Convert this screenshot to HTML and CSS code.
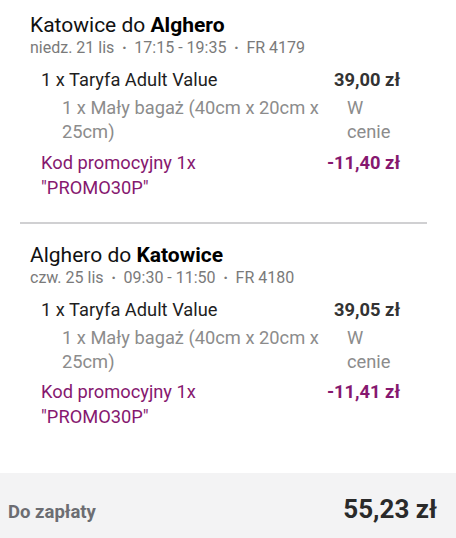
FILE: index.html
```html
<!DOCTYPE html>
<html lang="pl">
<head>
<meta charset="utf-8">
<link rel="stylesheet" href="styles.css">
</head>
<body>
<div class="summary">
  <section class="flight">
    <h2 class="route">Katowice do <b>Alghero</b></h2>
    <div class="meta"><span>niedz. 21 lis</span><span class="dot">·</span><span>17:15 - 19:35</span><span class="dot">·</span><span>FR 4179</span></div>
    <div class="row">
      <div class="label">1 x Taryfa Adult Value</div>
      <div class="price">39,00 zł</div>
    </div>
    <div class="subrow">
      <div class="label">1 x Mały bagaż (40cm x 20cm x 25cm)</div>
      <div class="incl">W cenie</div>
    </div>
    <div class="row promo">
      <div class="label">Kod promocyjny 1x "PROMO30P"</div>
      <div class="price">-11,40 zł</div>
    </div>
  </section>
  <hr class="divider">
  <section class="flight">
    <h2 class="route">Alghero do <b>Katowice</b></h2>
    <div class="meta"><span>czw. 25 lis</span><span class="dot">·</span><span>09:30 - 11:50</span><span class="dot">·</span><span>FR 4180</span></div>
    <div class="row">
      <div class="label">1 x Taryfa Adult Value</div>
      <div class="price">39,05 zł</div>
    </div>
    <div class="subrow">
      <div class="label">1 x Mały bagaż (40cm x 20cm x 25cm)</div>
      <div class="incl">W cenie</div>
    </div>
    <div class="row promo">
      <div class="label">Kod promocyjny 1x "PROMO30P"</div>
      <div class="price">-11,41 zł</div>
    </div>
  </section>
  <footer class="total">
    <span class="total-label">Do zapłaty</span>
    <span class="total-value">55,23 zł</span>
  </footer>
</div>
</body>
</html>
```
FILE: styles.css
```css
html, body {
  margin: 0;
  padding: 0;
  background: #ffffff;
}
body {
  font-family: Roboto, "Noto Sans", sans-serif;
  color: #1a1a1a;
  width: 456px;
  height: 538px;
  overflow: hidden;
}
.summary {
  display: flex;
  flex-direction: column;
}
.flight {
  padding: 13px 56px 0 30px;
}
.route {
  margin: 0;
  font-size: 21px;
  line-height: 25px;
  font-weight: 400;
  color: #111111;
}
.route b {
  font-weight: 700;
  color: #000000;
}
.meta {
  display: flex;
  font-size: 16px;
  line-height: 20px;
  color: #7a7a7a;
}
.meta .dot {
  width: 20px;
  text-align: center;
  font-weight: 700;
}
.row {
  display: flex;
  justify-content: space-between;
  align-items: flex-start;
  margin: 10px 0 0 11px;
  font-size: 18.3px;
  line-height: 24px;
  color: #1e1e1e;
}
.price {
  font-weight: 700;
  color: #333333;
  white-space: nowrap;
}
.subrow {
  display: grid;
  grid-template-columns: 1fr 53px;
  column-gap: 16px;
  margin: 4px 0 0 32px;
  font-size: 18.3px;
  line-height: 24px;
  color: #8c8c8c;
}
.promo {
  margin-top: 5.5px;
  line-height: 25px;
  color: #86186f;
}
.promo .label {
  width: 200px;
}
.promo .price {
  color: #86186f;
}
.divider {
  margin: 22px 29px 6px 20px;
  border: 0;
  height: 2px;
  background: #d0d0d2;
}
.total {
  margin-top: 44px;
  height: 65px;
  box-sizing: border-box;
  background: #f3f3f4;
  display: flex;
  justify-content: space-between;
  align-items: baseline;
  padding: 21px 19px 0 8px;
}
.total-label {
  font-size: 18.5px;
  font-weight: 700;
  color: #6c6d72;
}
.total-value {
  font-size: 26px;
  font-weight: 700;
  color: #2a2a2a;
}
```
